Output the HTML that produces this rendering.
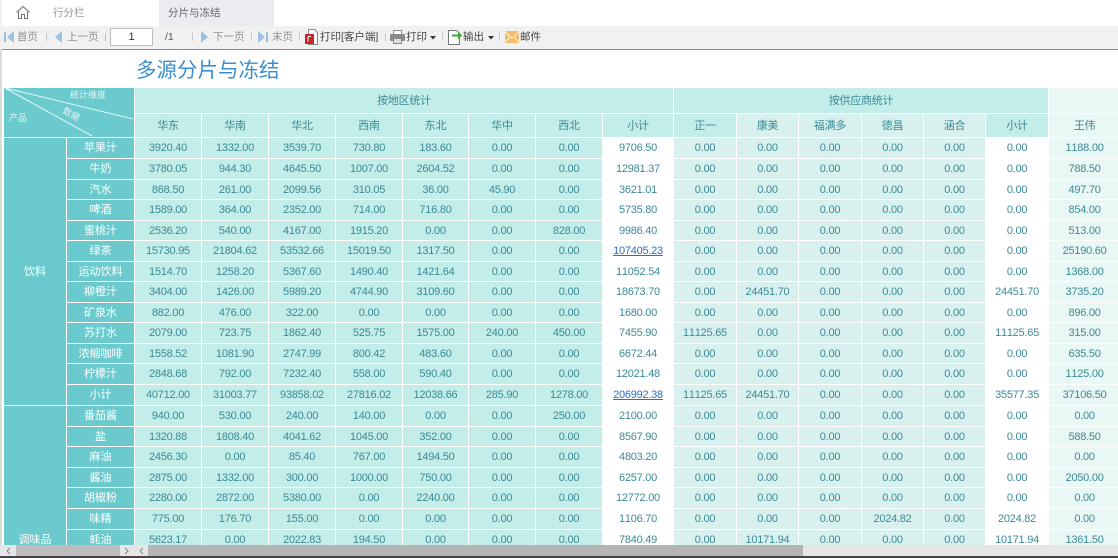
<!DOCTYPE html>
<html><head><meta charset="utf-8"><style>
*{box-sizing:border-box}
html,body{margin:0;padding:0}
body{width:1118px;height:558px;position:relative;overflow:hidden;background:#fff;font-family:"Liberation Sans","Noto Sans CJK SC",sans-serif}
.a{position:absolute}
.t{position:absolute;top:30px;font-size:10.5px;line-height:14px;color:#8f8f8f;white-space:nowrap}
.d{color:#444}
.s{position:absolute;top:33px;width:1px;height:8px;background:#c4c4c4}
#w{position:absolute;left:3px;top:87px;width:1115px;height:458px;overflow:hidden}
table{border-collapse:collapse;table-layout:fixed;width:1117px;font-size:11px;color:#3b8a96;letter-spacing:-.25px;font-kerning:none}
td{border:1px solid #fff;background:#c3ede8;text-align:center;padding:0;height:21px;line-height:14px;white-space:nowrap;overflow:hidden}
tr.n td{height:20px}
td.h,td.g{background:#6bcacd;color:#fff;letter-spacing:0}
td.x{background:#fff}
tr td:nth-child(n+10){background:#d8f1ee}
td.x:nth-child(n+10){background:#fff!important}
td.w{background:#e9f7f5!important;border-left:1px solid #bfe8e3}
a{color:#2a6fc0;text-decoration:underline}
</style></head><body>
<div class="a" style="left:0;top:0;width:1118px;height:26px;background:#fff"></div>
<div class="a" style="left:0;top:0;width:2px;height:26px;background:#f0f0f0"></div>
<div class="a" style="left:44px;top:0;width:114px;height:26px;background:#fff"></div>
<div class="a" style="left:159px;top:0;width:115px;height:26px;background:#ebecf0"></div>
<svg class="a" style="left:15px;top:5px" width="16" height="15" viewBox="0 0 16 15" fill="none" stroke="#777" stroke-width="1.1"><path d="M1.5 7.5 8 1.5l6.500 6M3.500 6.500V13.500h3V9.500h3v4h3V6.500"/></svg>
<div class="a" style="left:53px;top:6px;font-size:10.5px;line-height:14px;color:#999">行分栏</div>
<div class="a" style="left:168px;top:6px;font-size:10.5px;line-height:14px;color:#666">分片与冻结</div>
<div class="a" style="left:0;top:26px;width:1118px;height:23px;background:#f1f1f1"></div>
<div class="a" style="left:2px;top:49px;width:1116px;height:1px;background:#8a8a8a"></div>
<div class="a" style="left:0;top:49px;width:2px;height:496px;background:#dcdcdc"></div>

<svg class="a" style="left:4px;top:31px" width="11" height="12"><rect x="0" y="1" width="2" height="10" fill="#9dc0df"/><path d="M10 0v12L3 6z" fill="#9dc0df"/></svg>
<div class="t" style="left:17px">首页</div><div class="s" style="left:46px"></div>
<svg class="a" style="left:55px;top:31px" width="8" height="12"><path d="M7 0v12L0 6z" fill="#9dc0df"/></svg>
<div class="t" style="left:67px">上一页</div><div class="s" style="left:105px"></div>
<div class="a" style="left:110px;top:28px;width:43px;height:18px;background:#fff;border:1px solid #bcbcc4;font-size:11px;line-height:16px;text-align:center;color:#333">1</div>
<div class="t" style="left:165px;color:#555">/1</div><div class="s" style="left:192px"></div>
<svg class="a" style="left:201px;top:31px" width="8" height="12"><path d="M0 0v12L7 6z" fill="#9dc0df"/></svg>
<div class="t" style="left:213px">下一页</div><div class="s" style="left:251px"></div>
<svg class="a" style="left:258px;top:31px" width="11" height="12"><path d="M0 0v12L7 6z" fill="#9dc0df"/><rect x="8" y="1" width="2" height="10" fill="#9dc0df"/></svg>
<div class="t" style="left:272px">末页</div><div class="s" style="left:299px"></div>
<svg class="a" style="left:305px;top:29px" width="13" height="17"><path d="M3.500 .5h6l3 3v12h-9z" fill="#fff" stroke="#888"/><rect x="0" y="5" width="9" height="10" fill="#c9252b"/><path d="M3 7.500h3M3 7.500v5" stroke="#fff"/></svg>
<div class="t d" style="left:320px">打印[客户端]</div><div class="s" style="left:385px"></div>
<svg class="a" style="left:390px;top:30px" width="15" height="14"><rect x="3.500" y=".5" width="8" height="4" fill="#fff" stroke="#888"/><rect x="0" y="4" width="15" height="7" rx="1" fill="#888"/><rect x="3.500" y="8.500" width="8" height="5" fill="#ddd" stroke="#888"/></svg>
<div class="t d" style="left:406px">打印</div>
<svg class="a" style="left:430px;top:36px" width="6" height="4"><path d="M0 0h6L3 3.500z" fill="#333"/></svg><div class="s" style="left:442px"></div>
<svg class="a" style="left:448px;top:29px" width="14" height="16"><path d="M.5 1.500h8l3 3v11h-11z" fill="#fff" stroke="#777"/><path d="M4 5.500h6V2.500l4 4-4 4V7.500H4z" fill="#3fa535"/></svg>
<div class="t d" style="left:463px">输出</div>
<svg class="a" style="left:488px;top:36px" width="6" height="4"><path d="M0 0h6L3 3.500z" fill="#333"/></svg><div class="s" style="left:499px"></div>
<svg class="a" style="left:505px;top:31px" width="14" height="12"><rect width="14" height="12" rx="1" fill="#f4bc6a"/><path d="M0 1l7 6 7-6M0 11l5-5M14 11L9 6" fill="none" stroke="#fff" stroke-width=".8"/></svg>
<div class="t d" style="left:520px">邮件</div>

<div class="a" style="left:136px;top:57px;font-size:20.500px;line-height:28px;color:#3a8fd0">多源分片与冻结</div>

<div id="w"><table>
<colgroup><col style="width:63px"><col style="width:68px"><col style="width:67px"><col style="width:67px"><col style="width:67px"><col style="width:67px"><col style="width:66px"><col style="width:67px"><col style="width:67px"><col style="width:71px"><col style="width:63px"><col style="width:62px"><col style="width:63px"><col style="width:62px"><col style="width:62px"><col style="width:63px"><col style="width:72px"></colgroup>
<tr style="height:26px"><td colspan="2" rowspan="2" class="h" style="height:50px"></td><td colspan="8" style="height:26px;background:#c3ede8">按地区统计</td><td colspan="6" style="height:26px">按供应商统计</td><td class="w"></td></tr>
<tr style="height:24px"><td style="height:24px">华东<td style="height:24px">华南<td>华北<td>西南<td>东北<td>华中<td>西北<td>小计<td>正一<td>康美<td>福满多<td>德昌<td>涵合<td style="background:#c3ede8">小计<td class="w">王伟</tr>
<tr><td rowspan="13" class="g">饮料<td class="h">苹果汁<td>3920.40<td>1332.00<td>3539.70<td>730.80<td>183.60<td>0.00<td>0.00<td class="x">9706.50<td>0.00<td>0.00<td>0.00<td>0.00<td>0.00<td class="x">0.00<td class="w">1188.00</tr>
<tr><td class="h">牛奶<td>3780.05<td>944.30<td>4645.50<td>1007.00<td>2604.52<td>0.00<td>0.00<td class="x">12981.37<td>0.00<td>0.00<td>0.00<td>0.00<td>0.00<td class="x">0.00<td class="w">788.50</tr>
<tr class="n"><td class="h">汽水<td>868.50<td>261.00<td>2099.56<td>310.05<td>36.00<td>45.90<td>0.00<td class="x">3621.01<td>0.00<td>0.00<td>0.00<td>0.00<td>0.00<td class="x">0.00<td class="w">497.70</tr>
<tr><td class="h">啤酒<td>1589.00<td>364.00<td>2352.00<td>714.00<td>716.80<td>0.00<td>0.00<td class="x">5735.80<td>0.00<td>0.00<td>0.00<td>0.00<td>0.00<td class="x">0.00<td class="w">854.00</tr>
<tr class="n"><td class="h">蜜桃汁<td>2536.20<td>540.00<td>4167.00<td>1915.20<td>0.00<td>0.00<td>828.00<td class="x">9986.40<td>0.00<td>0.00<td>0.00<td>0.00<td>0.00<td class="x">0.00<td class="w">513.00</tr>
<tr><td class="h">绿茶<td>15730.95<td>21804.62<td>53532.66<td>15019.50<td>1317.50<td>0.00<td>0.00<td class="x"><a>107405.23</a><td>0.00<td>0.00<td>0.00<td>0.00<td>0.00<td class="x">0.00<td class="w">25190.60</tr>
<tr class="n"><td class="h">运动饮料<td>1514.70<td>1258.20<td>5367.60<td>1490.40<td>1421.64<td>0.00<td>0.00<td class="x">11052.54<td>0.00<td>0.00<td>0.00<td>0.00<td>0.00<td class="x">0.00<td class="w">1368.00</tr>
<tr><td class="h">柳橙汁<td>3404.00<td>1426.00<td>5989.20<td>4744.90<td>3109.60<td>0.00<td>0.00<td class="x">18673.70<td>0.00<td>24451.70<td>0.00<td>0.00<td>0.00<td class="x">24451.70<td class="w">3735.20</tr>
<tr class="n"><td class="h">矿泉水<td>882.00<td>476.00<td>322.00<td>0.00<td>0.00<td>0.00<td>0.00<td class="x">1680.00<td>0.00<td>0.00<td>0.00<td>0.00<td>0.00<td class="x">0.00<td class="w">896.00</tr>
<tr><td class="h">苏打水<td>2079.00<td>723.75<td>1862.40<td>525.75<td>1575.00<td>240.00<td>450.00<td class="x">7455.90<td>11125.65<td>0.00<td>0.00<td>0.00<td>0.00<td class="x">11125.65<td class="w">315.00</tr>
<tr class="n"><td class="h">浓缩咖啡<td>1558.52<td>1081.90<td>2747.99<td>800.42<td>483.60<td>0.00<td>0.00<td class="x">6672.44<td>0.00<td>0.00<td>0.00<td>0.00<td>0.00<td class="x">0.00<td class="w">635.50</tr>
<tr><td class="h">柠檬汁<td>2848.68<td>792.00<td>7232.40<td>558.00<td>590.40<td>0.00<td>0.00<td class="x">12021.48<td>0.00<td>0.00<td>0.00<td>0.00<td>0.00<td class="x">0.00<td class="w">1125.00</tr>
<tr><td class="h">小计<td>40712.00<td>31003.77<td>93858.02<td>27816.02<td>12038.66<td>285.90<td>1278.00<td class="x"><a>206992.38</a><td>11125.65<td>24451.70<td>0.00<td>0.00<td>0.00<td class="x">35577.35<td class="w">37106.50</tr>
<tr><td rowspan="7" class="g" style="vertical-align:top;padding-top:127px">调味品<td class="h">番茄酱<td>940.00<td>530.00<td>240.00<td>140.00<td>0.00<td>0.00<td>250.00<td class="x">2100.00<td>0.00<td>0.00<td>0.00<td>0.00<td>0.00<td class="x">0.00<td class="w">0.00</tr>
<tr class="n"><td class="h">盐<td>1320.88<td>1808.40<td>4041.62<td>1045.00<td>352.00<td>0.00<td>0.00<td class="x">8567.90<td>0.00<td>0.00<td>0.00<td>0.00<td>0.00<td class="x">0.00<td class="w">588.50</tr>
<tr><td class="h">麻油<td>2456.30<td>0.00<td>85.40<td>767.00<td>1494.50<td>0.00<td>0.00<td class="x">4803.20<td>0.00<td>0.00<td>0.00<td>0.00<td>0.00<td class="x">0.00<td class="w">0.00</tr>
<tr class="n"><td class="h">酱油<td>2875.00<td>1332.00<td>300.00<td>1000.00<td>750.00<td>0.00<td>0.00<td class="x">6257.00<td>0.00<td>0.00<td>0.00<td>0.00<td>0.00<td class="x">0.00<td class="w">2050.00</tr>
<tr><td class="h">胡椒粉<td>2280.00<td>2872.00<td>5380.00<td>0.00<td>2240.00<td>0.00<td>0.00<td class="x">12772.00<td>0.00<td>0.00<td>0.00<td>0.00<td>0.00<td class="x">0.00<td class="w">0.00</tr>
<tr><td class="h">味精<td>775.00<td>176.70<td>155.00<td>0.00<td>0.00<td>0.00<td>0.00<td class="x">1106.70<td>0.00<td>0.00<td>0.00<td>2024.82<td>0.00<td class="x">2024.82<td class="w">0.00</tr>
<tr><td class="h">蚝油<td>5623.17<td>0.00<td>2022.83<td>194.50<td>0.00<td>0.00<td>0.00<td class="x">7840.49<td>0.00<td>10171.94<td>0.00<td>0.00<td>0.00<td class="x">10171.94<td class="w">1361.50</tr>
</table></div>

<svg class="a" style="left:3px;top:87px" width="132" height="50" fill="none" stroke="#e4f6f6" stroke-width="1"><path d="M2 1 130 32M2 1 89 49"/></svg>
<div class="a" style="left:70px;top:89px;font-size:9px;line-height:13px;color:#e4f6f6">统计维度</div>
<div class="a" style="left:9px;top:112px;font-size:9px;line-height:13px;color:#e4f6f6">产品</div>
<div class="a" style="left:62px;top:108px;font-size:9px;line-height:13px;color:#e4f6f6;transform:rotate(28deg)">数据</div>

<div class="a" style="left:0;top:545px;width:1118px;height:11px;background:#e6e6e6"></div>
<div class="a" style="left:16px;top:545px;width:104px;height:11px;background:#bdbdbd"></div>
<div class="a" style="left:148px;top:545px;width:655px;height:11px;background:#b5b5b5"></div>
<svg class="a" style="left:0;top:545px" width="150" height="11" fill="none" stroke="#888"><path d="M10 3 7 6l3 3M125 3l3 3-3 3M143 3l-3 3 3 3"/></svg>
<div class="a" style="left:0;top:556px;width:1118px;height:2px;background:#444"></div>
</body></html>
